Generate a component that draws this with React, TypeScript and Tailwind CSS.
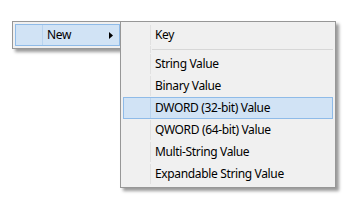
import React from "react";

type Item = { label: string; separator?: boolean; active?: boolean };

const items: Item[] = [
  { label: "Key" },
  { label: "", separator: true },
  { label: "String Value" },
  { label: "Binary Value" },
  { label: "DWORD (32-bit) Value", active: true },
  { label: "QWORD (64-bit) Value" },
  { label: "Multi-String Value" },
  { label: "Expandable String Value" },
];

function Row({ label, active, arrow }: { label: string; active?: boolean; arrow?: boolean }) {
  return (
    <div
      className={`flex h-[22px] items-center border ${
        active ? "border-[#8fbbe8] bg-[#d1e3f5]" : "border-transparent"
      }`}
    >
      <div className="w-[26px] shrink-0" />
      <div className={`h-full w-px shrink-0 ${active ? "bg-[#b9d3ee]" : "bg-[#e1e1e1]"}`} />
      <span className="flex-1 pl-[4px] pb-px text-[12px] leading-none tracking-[-0.35px] text-black">
        {label}
      </span>
      {arrow ? (
        <svg width="4" height="7" viewBox="0 0 4 7" className="mr-[6px]">
          <path d="M0 0 L4 3.5 L0 7 Z" fill="#000" />
        </svg>
      ) : null}
    </div>
  );
}

function Separator() {
  return (
    <div className="flex h-[7px] items-stretch">
      <div className="w-[27px] shrink-0" />
      <div className="w-px shrink-0 bg-[#e1e1e1]" />
      <div className="flex flex-1 flex-col justify-center pl-px">
        <div className="h-px bg-[#d7d7d7]" />
      </div>
    </div>
  );
}

export default function App() {
  return (
    <div
      className="flex h-[209px] w-[362px] items-start bg-white pl-[12px] pt-[21px]"
      style={{ fontFamily: '"Noto Sans", "Open Sans", Arial, sans-serif' }}
    >
      <div className="w-[111px] shrink-0 border border-[#979797] bg-[#f0f0f0] p-[2px] shadow-[3px_3px_3px_rgba(0,0,0,0.4)]">
        <Row label="New" active arrow />
      </div>
      <div className="relative z-10 -ml-[3px] w-[216px] shrink-0 border border-[#979797] bg-[#f0f0f0] p-[2px] shadow-[3px_3px_3px_rgba(0,0,0,0.4)]">
        {items.map((it, i) =>
          it.separator ? <Separator key={i} /> : <Row key={i} label={it.label} active={it.active} />
        )}
      </div>
    </div>
  );
}
